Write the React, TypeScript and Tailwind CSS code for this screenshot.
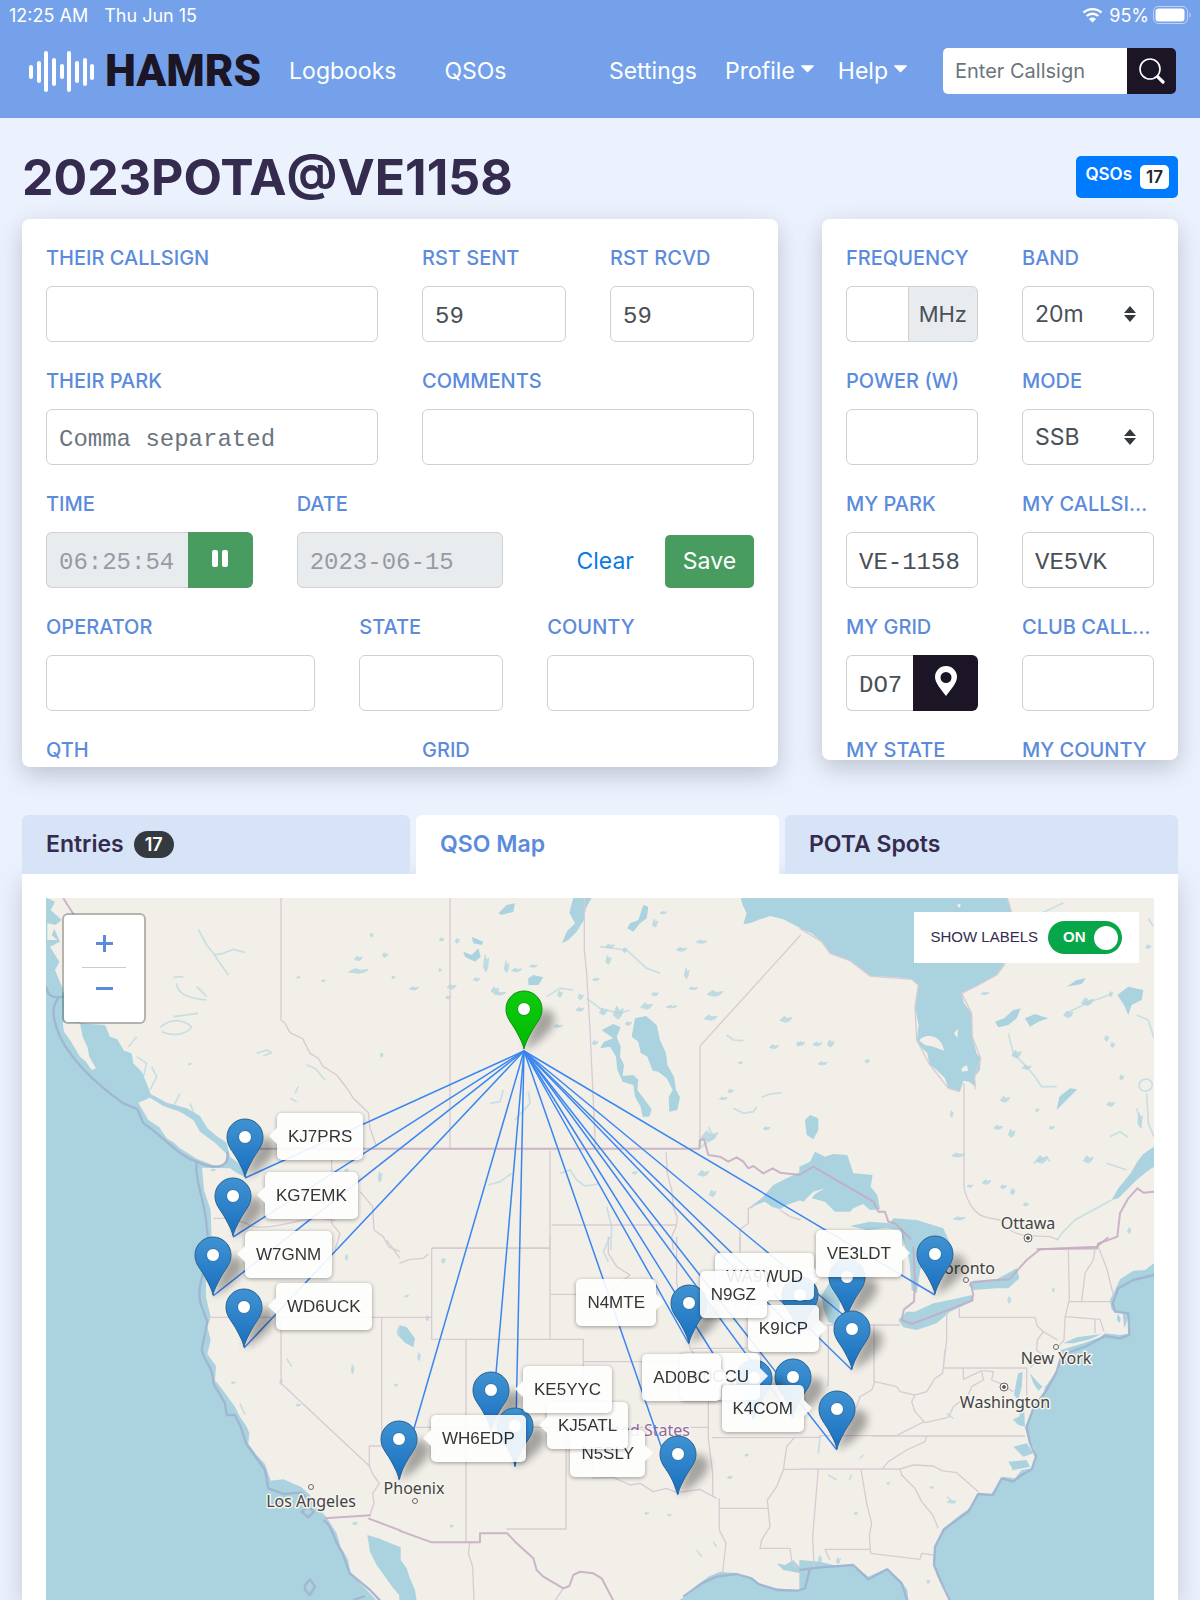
import React from 'react';
import { clsx } from 'clsx';

/* ---------- data ---------- */

type Station = { call: string; x: number; y: number; side: 'left' | 'right' };

// x / y is the tip of the pin on the map canvas, later entries are drawn on top
const stations: Station[] = [
  { call: 'KJ7PRS', x: 199, y: 280, side: 'right' },
  { call: 'KG7EMK', x: 187, y: 339, side: 'right' },
  { call: 'W7GNM', x: 167, y: 398, side: 'right' },
  { call: 'WD6UCK', x: 198, y: 450, side: 'right' },
  { call: 'WA9WUD', x: 801, y: 420, side: 'left' },
  { call: 'K9ICP', x: 806, y: 472, side: 'left' },
  { call: 'N4MTE', x: 643, y: 446, side: 'left' },
  { call: 'N9GZ', x: 754, y: 438, side: 'left' },
  { call: 'VE3LDT', x: 889, y: 397, side: 'left' },
  { call: 'N5SLY', x: 632, y: 597, side: 'left' },
  { call: 'KJ5ATL', x: 469, y: 569, side: 'right' },
  { call: 'KE5YYC', x: 445, y: 533, side: 'right' },
  { call: 'WH6EDP', x: 353, y: 582, side: 'right' },
  { call: 'K0CCU', x: 747, y: 520, side: 'left' },
  { call: 'AD0BC', x: 708, y: 521, side: 'left' },
  { call: 'K4COM', x: 791, y: 552, side: 'left' },
];

const home = { x: 478, y: 152 };

type Tile = {
  x: number;
  y: number;
  water: string[];
  land?: string[];
  coast?: string[];
  borders: string[];
  frontier?: string[];
  rivers?: string[];
  lakes: number[][];
};

// every tile is 1200 units wide, shown at a third of that
const tiles: Tile[] = [
  {
    x: -46,
    y: -8,
    water: [
      'M138 262L175 285 200 320 240 400 315 405 330 440 352 448 372 482 395 490 400 520 425 545 440 580 452 612 500 638 560 655 600 678 622 715 650 738 680 758 690 800 722 825 738 862 712 850 690 835 606 833 612 900 632 960 636 1080 138 1080Z',
      'M138 23L165 35 152 60 185 90 160 110 180 155 150 170 178 215 165 240 190 300 138 310Z',
      'M580 690L610 700 640 740 675 765 665 775 620 740 590 720Z',
    ],
    land: [
      'M188 395L240 400 248 440 262 470 268 500 288 535 275 540 258 515 240 500 210 450 192 425Z',
      'M415 638L450 623 490 648 540 665 580 690 600 725 645 758 680 792 676 826 640 826 590 806 540 775 522 758 500 745 478 712 445 690 428 660Z',
      'M142 100L168 105 155 135 172 150 142 150Z',
    ],
    coast: [
      'M140 290C142 320 160 325 190 320M175 325C155 350 155 380 180 440C220 520 300 590 370 640L412 657 430 700C480 730 530 795 590 815C640 838 690 840 682 785',
      'M590 815C582 880 625 940 624 1080',
    ],
    borders: [
      'M843 23V390L855 400 870 428 908 446 930 490 955 505 970 530 1010 555 1045 600 1060 625 1105 668 1110 715 1130 770',
      'M995 808V1000L1020 1030 1005 1080',
      'M640 985H690L740 1000C760 1022 830 1010 900 992L960 985 1005 992',
      'M1080 905L1118 950 1122 1020 1150 1040 1165 1070 1200 1085',
    ],
    frontier: ['M690 776H1202', 'M190 25L220 72'],
    rivers: [
      'M595 118L620 165 640 190 660 220 685 255M640 195L670 190 700 178 735 187',
      'M530 280C532 310 560 325 620 330M520 262L550 260M590 290L620 320',
      'M480 412C510 388 540 382 575 410C560 435 520 440 485 425M520 380L595 370',
      'M770 490L800 480 815 488 790 497',
      'M410 500L440 520 430 560M385 470L410 440M450 600L470 560 455 530M520 650L540 610M590 690L570 640',
      'M885 610L895 590M870 625L890 635M920 525L945 535 975 570',
    ],
    lakes: [[1075, 205, 12, 7], [1075, 243, 30, 7], [1155, 195, 8, 7], [1180, 262, 5, 4], [1115, 135, 5, 6], [895, 262, 5, 3], [970, 272, 6, 3], [1140, 860, 6, 16], [640, 840, 8, 3], [1145, 495, 4, 7], [1040, 840, 6, 4], [570, 522, 5, 3]],
  },
  {
    x: 354,
    y: -8,
    water: [
      'M1022 23H1202V115L1150 88 1110 78 1080 88 1050 100 1030 102 1040 70 1028 45Z',
      'M520 23H575L558 55 552 90 530 125 505 150 486 160 500 125 525 100 508 68Z',
      'M705 385L738 378 770 405 780 450 798 490 802 525 822 560 828 600 840 622 832 660 808 665 806 622 818 600 800 565 775 545 758 542 742 500 722 488 715 455 695 440Z',
      'M605 420L640 402 662 412 650 440 662 470 660 500 672 525 668 558 700 555 715 570 712 600 735 630 755 658 748 680 728 680 722 650 705 620 700 585 668 575 652 540 648 500 630 470 600 475 612 455 640 445Z',
      'M1045 955L1085 925 1120 885 1160 865 1202 845V930L1160 945 1140 958 1115 950 1095 935Z',
      'M730 45L745 50 740 85 720 100 700 125 682 115 690 100 715 90Z',
      'M190 185L215 195 235 175 242 200 225 215 195 200Z',
      'M385 265L400 255 430 262 415 285 385 285Z',
      'M295 70L320 45 345 40 340 65 305 75Z',
      'M215 140L250 155 245 165 220 160Z',
    ],
    borders: [
      'M150 23V776',
      'M553 23V180L560 250 570 420 578 590 585 740V776',
      'M900 770V468L1202 135',
      'M450 782V1080',
      'M455 1005H830',
      'M798 785L802 850 815 900 820 950 832 985 828 1010 815 1040 820 1080',
      'M1060 950L1045 955V1000L1020 1018V1080',
      'M95 1075H450',
      'M1140 960L1170 980 1202 990',
    ],
    frontier: ['M-2 776H898L900 750 912 748 925 795 960 800 985 815 1010 802 1030 815 1045 835 1060 828 1090 850 1118 835 1140 848 1202 855'],
    rivers: [
      'M480 850L510 840 530 870 555 888 595 882',
      'M265 885L300 875 335 850',
      'M270 640L300 635 310 600M345 690L390 640 385 605',
      'M980 435L1000 450 1030 452M1000 655L1030 670 1060 665 1070 650',
      'M1085 622L1110 612 1145 608M925 710L940 740 900 775M620 950L635 1010 632 1080',
      'M560 325L600 355 660 370 690 360M440 320L480 295 520 300M600 170L680 180 740 235 780 250',
    ],
    lakes: [[125, 148, 7, 5], [172, 152, 6, 8], [258, 220, 8, 26], [320, 230, 7, 18], [350, 240, 16, 5], [285, 300, 12, 10], [300, 310, 18, 5], [230, 268, 10, 5], [155, 290, 14, 7], [145, 322, 8, 5], [42, 295, 14, 5], [120, 240, 4, 5], [475, 408, 14, 4], [542, 320, 8, 9], [540, 358, 12, 6], [480, 312, 7, 10], [588, 268, 10, 4], [630, 168, 13, 6], [625, 210, 8, 13], [675, 180, 6, 8], [765, 100, 8, 12], [790, 68, 10, 4], [905, 155, 16, 5], [845, 178, 16, 6], [860, 250, 7, 16], [945, 310, 24, 9], [880, 295, 13, 4], [932, 383, 20, 8], [815, 350, 16, 4], [765, 312, 10, 6], [740, 348, 18, 10], [655, 368, 15, 20], [610, 365, 12, 10], [685, 400, 10, 6], [585, 458, 8, 7], [1158, 388, 18, 9], [1122, 470, 14, 6], [1022, 518, 7, 3], [992, 603, 9, 5], [970, 625, 12, 4], [910, 850, 17, 9], [938, 910, 10, 10], [928, 738, 26, 16], [1100, 715, 10, 5], [345, 315, 8, 8], [400, 228, 12, 4], [705, 848, 8, 4], [1195, 462, 5, 7]],
  },
  {
    x: 754,
    y: -8,
    water: [
      'M-2 23H622L635 68 620 210 590 255 530 288 485 310 492 340 515 370 517 440 530 490 542 505 540 540 524 560 526 590 508 575 490 572 480 605 462 600 445 595 435 565 410 540 388 522 382 490 362 470 350 450 356 405 345 352 355 285 335 268 290 262 210 258 180 235 150 212 90 190 65 155 35 130-2 115Z',
      'M-2 830L30 815 45 785 75 800 100 792 142 795 160 850 218 855 212 890 232 915 240 958 210 960 190 942 160 955 150 965 105 965 75 935 35 925 45 912 75 895 40 905 10 935-2 930Z',
      'M150 1008L210 995 270 1000 280 985 350 990 430 1015 450 1060 430 1080 380 1080 345 1190 325 1100 300 1020 260 1015 200 1020Z',
      'M1062 770L1030 792 1012 815 992 850 955 895 935 930 955 925 1010 870 1040 845 1062 830Z',
      'M770 660L778 620 810 595 832 598 800 630Z',
      'M585 395L612 385 640 360 662 355 650 385 625 405 595 412Z',
      'M952 315L985 290 1030 300 1025 330 995 345 985 375 972 345Z',
      'M800 290L830 270 858 265 845 282Z',
      'M15 690L30 675 55 685 55 720 40 748 20 735Z',
      'M675 385L705 372 745 385 715 395 690 410Z',
    ],
    land: ['M358 452C370 430 425 430 432 482L400 470 375 465Z', 'M485 535L500 525 505 542 485 545Z', 'M470 45L482 40 480 55Z', 'M462 430L475 415 472 445Z'],
    borders: [
      'M492 580V890C500 940 530 978 560 982L600 990C640 1050 700 1035 750 1040L775 1050',
      'M0 115L65 155 90 190 150 212 210 258 335 268 355 285 345 352 350 450 388 522 445 595 480 605',
      'M485 310L515 370 517 440 542 505 524 560 526 598M622 23L635 68M485 310L530 288 590 255 615 222',
    ],
    frontier: [
      'M-2 855L40 830 220 935 235 965 255 965 265 995 285 1000 330 1045 348 1085',
      'M1062 905L1030 908 1012 895 985 925 960 970 952 1040 920 1052 895 1060 890 1078M710 1078L890 1075',
    ],
    rivers: [
      'M935 930L880 960 825 990 790 1025 770 1050',
      'M625 430L640 490 680 530 705 560 725 590 770 590',
      'M800 370L860 340 935 312',
      'M1040 610L1045 700 1062 740M1010 655L1025 715M1045 85L1060 110M920 820L980 840',
      'M1010 375L1045 390 1062 445M700 820L740 800 750 815M930 740L960 725 985 742M725 70L790 38',
      'M1018 590C1012 565 1050 560 1056 580C1060 605 1025 612 1018 590',
    ],
    lakes: [[862, 335, 18, 12], [805, 373, 14, 10], [650, 492, 14, 12], [680, 532, 14, 6], [555, 310, 12, 4], [933, 312, 5, 8], [920, 445, 6, 9], [938, 465, 6, 8], [965, 562, 6, 8], [615, 628, 14, 9], [932, 642, 12, 7], [865, 808, 15, 11], [725, 808, 18, 12], [635, 730, 10, 12], [595, 712, 14, 6], [475, 795, 20, 6], [510, 888, 9, 4], [560, 876, 13, 7], [610, 890, 10, 6], [638, 905, 7, 10], [678, 943, 8, 5], [478, 985, 18, 5], [92, 460, 10, 11], [5, 460, 9, 6], [52, 462, 14, 6], [68, 520, 14, 5], [202, 513, 7, 6], [455, 672, 4, 10], [1020, 690, 7, 22], [755, 713, 8, 5], [712, 660, 6, 5], [1045, 170, 8, 6], [988, 1022, 5, 9]],
  },
  {
    x: -46,
    y: 342,
    water: [
      'M138 0H636L630 60 618 110 618 170 632 232 622 260 632 300 622 342 648 378 645 420 672 455 705 500 720 530 740 560 748 580 745 612 770 645 795 672 812 722 850 718 905 742 930 765 940 785 962 810 985 840 1010 880 1022 920 1045 960 1050 1000 1100 1050 1130 1082H138Z',
      'M1102 885L1135 895 1202 922V1070L1180 1045 1130 975 1110 935Z',
    ],
    coast: [
      'M636 0V45C600 100 590 170 605 200L622 245 605 330C615 370 640 380 640 430L675 490 680 525 705 525 722 560 738 610 795 690 805 745 850 762 905 758 925 780',
      'M970 840C1000 860 1000 900 1025 935L1050 1000 1110 1050 1140 1082',
      'M915 1035L930 1018 945 1040 930 1065 915 1050ZM905 815L925 800 942 815 925 832ZM1060 1080L1095 1068',
    ],
    borders: [
      'M625 232H1202',
      'M843 232V430L1112 682',
      'M1145 232V618H1108V680L1120 705 1138 730 1118 760 1122 790 1110 825',
      'M1160 0L1200 55',
    ],
    frontier: ['M975 835L1112 826M1105 835L1202 872'],
    rivers: ['M720 490L735 525', 'M860 355L875 380', 'M1170 1010L1180 1040'],
    lakes: [[843, 425, 4, 8], [1058, 388, 4, 14], [700, 428, 6, 3], [1065, 850, 7, 5], [1188, 435, 5, 4], [1040, 52, 4, 9], [895, 495, 8, 3], [1197, 275, 6, 14]],
  },
  {
    x: 354,
    y: 342,
    water: [
      'M-2 955L20 985 28 1010 45 1050 50 1082H-2Z',
      'M-2 255L20 262 45 295 40 322 15 308-2 290Z',
      'M835 1082L870 1060 900 1035 940 1010 1000 1003 1050 1012 1075 1030 1130 1045 1202 1052V1082Z',
      'M880 1045L925 1010 960 995 1010 1000 1000 1010 930 1025Z',
      'M1130 970L1155 975 1180 960 1202 985V1000L1150 990Z',
    ],
    land: ['M1130 1030L1150 1015 1202 1015V1045L1150 1040Z'],
    coast: ['M850 1070L905 1030 950 1010 1010 1002 1055 1015 1075 1032 1130 1050 1202 1052'],
    borders: [
      'M-2 232H95M95 24V298H550V365M450-10V298M95 24H450',
      'M-2 70L30 58 70 55 85 42',
      'M198 298V905M-2 562H500M550 365H870M550 365V562H925',
      'M498 562V867H320',
      'M500 600H580V715L640 712 690 735 720 730 760 755 800 745 830 758 900 748 950 775',
      'M450 163H620L690 105M690 105L650 80 625 40V-10',
      'M830-10V130L850 210 870 325H1040M870 325L900 365 925 420V595L938 700V770M935 593H1202',
      'M958 775V870L978 910 972 960 968 1000M960 805H1105',
      'M1185 590L1160 620 1150 690 1130 740 1102 780 1110 860 1085 900 1080 925H1170L1175 960 1190 985M1150 688H1202',
      'M210 905L205 940 218 980 222 1082M490 1045L465 1082',
      'M1020-10V40',
    ],
    frontier: ['M-2 872L95 907H240V880H322L350 910 400 955 410 990 430 1010 490 1045 508 1038 520 1005 540 995 580 1000 605 1015 640 1082'],
    rivers: ['M630-10L610 35 625 65', 'M890 930L905 950M940 905L950 920'],
    lakes: [[130, 62, 6, 8], [57, 350, 4, 12], [82, 235, 4, 8], [20, 168, 6, 3], [155, 858, 5, 4], [740, 820, 6, 3], [808, 825, 6, 3], [990, 712, 8, 4], [1040, 645, 5, 4]],
  },
  {
    x: 754,
    y: 342,
    water: [
      'M1062 70L1035 90 1000 92 960 118 945 150 930 180 935 210 955 215 950 240 975 262 985 225 988 280 960 285 915 280 900 292 850 310 782 330 775 392 735 440 728 470 690 525 675 565 685 600 702 625 708 660 695 685 665 690 645 715 610 710 592 738 572 765 530 762 515 800 480 825 430 865 405 915 400 960 412 1010 440 1050 450 1082H1062Z',
      'M-2 960L60 965 100 975 160 975 205 1010 260 985 300 1020 322 1050 325 1082H-2Z',
      'M505 135L520 122 590 118 650 85 658 115 625 145 590 145 520 150Z',
      'M295 240L320 215 345 215 400 190 460 178 515 165 522 182 450 215 410 250 350 270 310 262Z',
      'M65 165L100 110 120 150 118 230 105 255 85 245 70 205Z',
      'M325 0H370L365 60 350 160 335 150 330 80Z',
      'M655 400L668 395 665 440 655 480 642 465 648 430ZM690 400L712 425 728 440 715 452 700 430Z',
      'M650 490L672 500 675 560 655 555 640 540 660 530ZM640 620L680 610 700 640 670 650ZM625 665L680 660 690 680 640 690Z',
      'M790 310L830 292 905 282 870 298 820 310Z',
    ],
    land: ['M950 215L968 218 972 262 958 262 962 235Z'],
    coast: [
      'M1062 105L1000 120 955 145 938 190 945 215 985 220 988 285 960 295 915 288 860 318 785 345 770 395 740 450 700 505 680 560 690 610 708 650 695 688 660 708 640 725 605 715 578 765 535 762 505 815 432 868 405 920 402 975 425 1030 450 1082',
      'M-2 990L60 982 160 975 205 1018 262 988 305 1030 322 1082M30 985L15 1045-2 1050',
    ],
    borders: [
      'M805 25L808 180 795 232 792 300 775 320M885 25L880 60 855 100 845 185M805 185H932M795 230L900 238 912 275M885 238V280M895 20L920 85 940 165',
      'M478 205V232H705L712 258 730 275 772 300M730 275L712 300 710 330 728 345 692 382',
      'M440 215V300L430 384H680V500M435 330L428 400 405 415 380 455 345 465 335 485 345 515 375 548 445 532 460 500 505 465 515 440 550 420 545 392 490 418V384M550 392L580 395 575 420 600 430 640 455',
      'M80 255H222V430M222 255H300M85 255V420L82 440',
      'M345 465L300 455 290 440 225 425 215 450 180 470 170 500 120 520',
      'M372 545L290 587H60L58 592H-2M215 588H675',
      'M380 588L375 605 320 630 265 665 245 688M-2 687H300L340 675 400 678 425 692 470 698 535 755M300 687L305 705 345 745 365 785 398 825 415 865',
      'M183 687L200 790 215 850 208 885 212 940 360 958 365 940 400 945M212 928H75L90 960M55 687L38 890 42 980',
    ],
    frontier: ['M340 20L345 120 342 185 312 208 305 240 335 252 440 212 515 182 520 165 512 128 560 122 628 118 680 60 720 28 890 20 925-8'],
    rivers: ['M60 590L55 640', 'M440 770L465 790', 'M110 720L85 705M155 705L148 720', 'M180 655L190 645M440 520L460 535M640 540L670 525M635 690L670 668'],
    lakes: [[628, 180, 5, 10], [455, 785, 14, 4], [395, 742, 6, 3], [168, 820, 5, 4], [385, 1025, 4, 6], [760, 150, 3, 6], [265, 730, 5, 3], [60, 958, 5, 12], [115, 962, 6, 10]],
  },
];

// name, x, baseline, anchor, dot x, dot y, capital
const cities: [string, number, number, 'middle' | 'end', number, number, boolean][] = [
  ['Ottawa', 982, 331, 'middle', 982, 340, true],
  ['Toronto', 949, 376, 'end', 920, 382, false],
  ['New York', 1010, 466, 'middle', 1010, 449, false],
  ['Washington', 959, 510, 'middle', 958, 489, true],
  ['Los Angeles', 265, 609, 'middle', 265, 589, false],
  ['Phoenix', 368, 596, 'middle', 369, 603, false],
];

/* ---------- small pieces ---------- */

const Caret = () => (
  <svg width="13" height="8" viewBox="0 0 14 8" className="mb-1 shrink-0" aria-hidden="true">
    <path d="M1 0h12c.8 0 1 .8.5 1.300L7.600 7.200a.8.8 0 0 1-1.200 0L.5 1.300C0 .8.2 0 1 0Z" fill="currentColor" />
  </svg>
);

type FieldProps = {
  id: string;
  label: string;
  value?: string;
  placeholder?: string;
  disabled?: boolean;
  className?: string;
  addon?: React.ReactNode;
  options?: string[];
};

const Field: React.FC<FieldProps> = ({ id, label, value, placeholder, disabled, className, addon, options }) => (
  <div className={clsx('min-w-0', className)}>
    <label htmlFor={id} className="mb-[13px] block truncate text-[20px] leading-[30px] font-medium text-[#5c8bdc]">
      {label}
    </label>
    {options ? (
      <div className="relative">
        <select
          id={id}
          defaultValue={options[0]}
          className="h-14 w-full appearance-none rounded-md border border-[#ced0d3] bg-white px-3 text-[23px] text-[#495057] outline-none"
        >
          {options.map((o) => (
            <option key={o}>{o}</option>
          ))}
        </select>
        <svg className="pointer-events-none absolute top-5 right-[18px]" width="12" height="16" viewBox="0 0 12 16" aria-hidden="true">
          <path d="M6 0l6 7H0zM6 16l6-7H0z" fill="#343a40" />
        </svg>
      </div>
    ) : (
      <div className="flex">
        <input
          id={id}
          type="text"
          defaultValue={value}
          placeholder={placeholder}
          disabled={disabled}
          className={clsx(
            'h-14 w-full min-w-0 border border-[#ced0d3] px-3 pt-1 font-["Liberation_Mono",monospace] text-2xl outline-none placeholder:text-[#6c757d]',
            addon ? 'flex-1 rounded-l-md border-r-0' : 'rounded-md',
            disabled ? 'bg-[#e9ecef] text-[#969ca3]' : 'bg-white text-[#495057]',
          )}
        />
        {addon}
      </div>
    )}
  </div>
);

/* ---------- map ---------- */

const Pin: React.FC<{ x: number; y: number; home?: boolean }> = ({ x, y, home: isHome }) => (
  <g transform={`translate(${x} ${y})`}>
    <path d="M0 0C6-14 10-36 18-40C30-42 34-30 27-21C19-11 7-3 0 0Z" fill="#000" opacity=".32" filter="url(#soft)" />
    <path
      d="M0-1C-1-6-4-12-9-21C-14-29-18-33-18-41A18 18 0 0 1 18-41C18-33 14-29 9-21C4-12 1-6 0-1Z"
      fill={isHome ? 'url(#pin-green)' : 'url(#pin-blue)'}
      stroke={isHome ? '#0b8f0b' : '#2a6390'}
      strokeWidth="1"
    />
    <circle cy="-41" r="6.500" fill="#fff" stroke={isHome ? '#07a007' : '#2c72a8'} strokeWidth="1" />
  </g>
);

const BaseMap = () => (
  <svg className="block" width="1108" height="702" viewBox="0 0 1108 702" role="img" aria-label="QSO map of North America">
    <defs>
      <linearGradient id="pin-blue" x1="0" y1="0" x2="0" y2="1">
        <stop offset="0" stopColor="#3f93d2" />
        <stop offset="1" stopColor="#1a6fc0" />
      </linearGradient>
      <linearGradient id="pin-green" x1="0" y1="0" x2="0" y2="1">
        <stop offset="0" stopColor="#0fcb0f" />
        <stop offset="1" stopColor="#00bb00" />
      </linearGradient>
      <filter id="soft" x="-50%" y="-50%" width="200%" height="200%">
        <feGaussianBlur stdDeviation="4" />
      </filter>
    </defs>
    <rect width="1108" height="702" fill="#f2efe9" />

    {tiles.map((t, i) => (
      <g key={i} transform={`translate(${t.x} ${t.y}) scale(0.33333)`} strokeLinejoin="round">
        <g fill="#aad3df">
          {t.water.map((d) => (
            <path key={d} d={d} />
          ))}
          {t.lakes.map(([cx, cy, rx, ry]) => (
            <path
              key={`${cx}-${cy}`}
              d={`M${cx - rx} ${cy + ry * 0.4}L${cx - rx * 0.3} ${cy - ry}L${cx + rx * 0.2} ${cy - ry * 0.3}L${cx + rx} ${cy - ry * 0.6}L${cx + rx * 0.6} ${cy + ry * 0.5}L${cx} ${cy + ry}Z`}
              stroke="#aad3df"
              strokeWidth="3"
              opacity=".7"
            />
          ))}
        </g>
        {t.land?.map((d) => <path key={d} d={d} fill="#f2efe9" />)}
        {t.rivers?.map((d) => <path key={d} d={d} fill="none" stroke="#aad3df" strokeWidth="5" opacity=".6" />)}
        {t.borders.map((d) => <path key={d} d={d} fill="none" stroke="#d8cbd4" strokeWidth="4" />)}
        {t.coast?.map((d) => <path key={d} d={d} fill="none" stroke="#9fb3cf" strokeWidth="7" opacity=".9" />)}
        {t.frontier?.map((d) => <path key={d} d={d} fill="none" stroke="#c6a9c2" strokeWidth="6" opacity=".85" />)}
      </g>
    ))}

    <g fontFamily='"Noto Sans", sans-serif' fontSize="16" stroke="#f5f3ee" strokeWidth="3" strokeLinejoin="round" paintOrder="stroke">
      <text x="644" y="538" textAnchor="end" fill="#94689b">
        United States
      </text>
      {cities.map(([name, x, y, anchor]) => (
        <text key={name} x={x} y={y} textAnchor={anchor} fill="#444">
          {name}
        </text>
      ))}
    </g>
    {cities.map(([name, , , , cx, cy, capital]) => (
      <g key={name} fill="#f8f7f4" stroke="#666" strokeWidth="1">
        <circle cx={cx} cy={cy} r={capital ? 4 : 2.5} />
        {capital && <circle cx={cx} cy={cy} r="1.500" fill="#555" />}
      </g>
    ))}

    <g stroke="#3a86f0" strokeWidth="1.500">
      {stations.map((s) => (
        <line key={s.call} x1={home.x} y1={home.y + 1} x2={s.x} y2={s.y} />
      ))}
    </g>
    {[...stations].sort((a, b) => a.y - b.y).map((s) => (
      <Pin key={s.call} x={s.x} y={s.y} />
    ))}
    <Pin x={home.x} y={home.y} home />
  </svg>
);

const StationLabel: React.FC<{ station: Station }> = ({ station: { call, x, y, side } }) => (
  <div
    className="absolute flex h-[47px] items-center rounded-[5px] bg-white px-[11px] font-['Liberation_Sans',Arial,sans-serif] text-[17px] whitespace-nowrap text-[#222] opacity-90 shadow-[0_1px_4px_rgba(0,0,0,0.4)]"
    style={side === 'right' ? { left: x + 32, top: y - 65 } : { right: 1108 - x + 33, top: y - 65 }}
  >
    <span
      className={clsx(
        'absolute top-[15px] border-y-8 border-transparent',
        side === 'right' ? '-left-[8px] border-r-8 border-r-white' : '-right-[8px] border-l-8 border-l-white',
      )}
    />
    {call}
  </div>
);

const QsoMap = () => (
  <div className="relative h-[702px] overflow-hidden bg-[#aad3df]">
    <div className="relative w-[1108px]">
      <BaseMap />
      {stations.map((s) => (
        <StationLabel key={s.call} station={s} />
      ))}
    </div>

    <div className="absolute top-[15px] left-4 flex h-[111px] w-[84px] flex-col items-center rounded-md border-2 border-black/25 bg-white bg-clip-padding pt-[5px] text-[#5c8bdc]">
      <button type="button" aria-label="Zoom in" className="flex h-[48px] w-11 items-center justify-center border-b border-[#ccc]">
        <svg width="17" height="17" viewBox="0 0 17 17" aria-hidden="true">
          <path d="M8.500 0v17M0 8.500h17" stroke="currentColor" strokeWidth="3" />
        </svg>
      </button>
      <button type="button" aria-label="Zoom out" className="flex h-[40px] w-11 items-center justify-center">
        <svg width="17" height="17" viewBox="0 0 17 17" aria-hidden="true">
          <path d="M0 8.500h17" stroke="currentColor" strokeWidth="3" />
        </svg>
      </button>
    </div>

    <label className="absolute top-[14px] right-[15px] flex h-[51px] items-center gap-[10px] bg-white pr-[17px] pl-4 font-['Liberation_Sans',Arial,sans-serif] text-[15px] text-[#352b4f]">
      SHOW LABELS
      <input type="checkbox" defaultChecked className="peer sr-only" />
      <span className="flex h-[33px] w-[74px] items-center justify-between rounded-full bg-[#06a649] pr-1 pl-[15px] text-[15px] font-bold text-white">
        ON
        <span className="size-6 rounded-full bg-white" />
      </span>
    </label>
  </div>
);

/* ---------- header ---------- */

// x, y, height
const bars = [
  [0, 14, 14],
  [8, 10, 22],
  [15, 0, 41],
  [23, 7, 28],
  [31, 13, 15],
  [38, 0, 41],
  [46, 10, 22],
  [54, 7, 28],
  [61, 13, 16],
];

const Header = () => (
  <header className="h-[118px] bg-[#74a1ea] text-white">
    <div className="flex h-[30px] items-center pr-2 pl-[9px] text-[18px]">
      <span>12:25 AM</span>
      <span className="ml-4">Thu Jun 15</span>
      <svg className="ml-auto" width="21" height="16" viewBox="0 0 21 16" fill="none" stroke="currentColor" aria-hidden="true">
        <path d="M1.500 5.700a13 13 0 0 1 18 0M4.700 9a8.400 8.400 0 0 1 11.600 0" strokeWidth="2.400" />
        <path d="M10.500 15.500L7 12a5 5 0 0 1 7 0z" fill="currentColor" stroke="none" />
      </svg>
      <span className="ml-[6px]">95%</span>
      <svg className="ml-1" width="39" height="18" viewBox="0 0 39 18" aria-hidden="true">
        <rect x=".5" y=".5" width="34" height="17" rx="5" fill="none" stroke="#fff" strokeOpacity=".55" />
        <rect x="2.500" y="2.500" width="29" height="13" rx="3" fill="#fff" />
        <path d="M36.500 6.500v5c1.500-.5 1.500-4.500 0-5Z" fill="#fff" opacity=".6" />
      </svg>
    </div>
    <nav className="flex h-[82px] items-center pr-6 pl-[29px] text-[23px]">
      <a href="#home" className="flex items-center gap-[10px]">
        <svg width="66" height="41" viewBox="0 0 66 41" fill="#fff" aria-hidden="true">
          {bars.map(([x, y, h]) => (
            <rect key={x} x={x} y={y} width="4" height={h} rx="2" />
          ))}
        </svg>
        <span className="font-[Roboto,sans-serif] text-[44px] leading-none font-black text-[#1b1525]">HAMRS</span>
      </a>
      <a href="#logbooks" className="ml-7">Logbooks</a>
      <a href="#qsos" className="ml-12">QSOs</a>
      <a href="#settings" className="ml-auto">Settings</a>
      <button type="button" className="ml-7 flex items-center gap-[6px]">
        Profile <Caret />
      </button>
      <button type="button" className="ml-6 flex items-center gap-[6px]">
        Help <Caret />
      </button>
      <form className="ml-9 flex h-[46px] overflow-hidden rounded-[5px]">
        <input
          type="text"
          aria-label="Enter Callsign"
          placeholder="Enter Callsign"
          className="w-[184px] bg-white px-3 text-[20px] text-[#495057] outline-none placeholder:text-[#6c757d]"
        />
        <button type="button" aria-label="Search" className="flex w-[49px] items-center justify-center bg-[#1b1525]">
          <svg width="26" height="26" viewBox="0 0 26 26" fill="none" stroke="currentColor" strokeLinecap="round" aria-hidden="true">
            <circle cx="11" cy="11" r="10" strokeWidth="1.600" />
            <path d="M18.800 18.800L24 24" strokeWidth="3.200" />
          </svg>
        </button>
      </form>
    </nav>
  </header>
);

/* ---------- page ---------- */

const card = 'overflow-hidden rounded-lg bg-white px-6 pt-6 shadow-[0_8px_24px_rgba(60,75,95,0.28)]';

export default function App() {
  return (
    <div className="min-h-screen bg-[#ecf2fd] font-[Inter,sans-serif] text-[#352b4f]">
      <Header />

      <main className="px-[22px]">
        <div className="flex h-[101px] items-center justify-between pt-4">
          <h1 className="text-[50px] leading-none font-bold">2023POTA@VE1158</h1>
          <button type="button" className="flex h-[42px] items-center gap-2 rounded-[5px] bg-[#007bff] px-[9px] text-[17px] font-semibold text-white">
            <span className="pb-1">QSOs</span>
            <span className="rounded-[5px] bg-white px-[6px] leading-6 text-[#212529]">17</span>
          </button>
        </div>

        <div className="grid grid-cols-12 items-start gap-x-11">
          <form className={clsx(card, 'col-span-8 grid h-[548px] grid-cols-12 content-start gap-x-11 gap-y-6')}>
            <Field id="their-callsign" label="THEIR CALLSIGN" className="col-span-6" />
            <Field id="rst-sent" label="RST SENT" value="59" className="col-span-3" />
            <Field id="rst-rcvd" label="RST RCVD" value="59" className="col-span-3" />
            <Field id="their-park" label="THEIR PARK" placeholder="Comma separated" className="col-span-6" />
            <Field id="comments" label="COMMENTS" className="col-span-6" />
            <Field
              id="time"
              label="TIME"
              value="06:25:54"
              disabled
              className="col-span-4"
              addon={
                <button type="button" aria-label="Pause clock" className="flex w-[65px] shrink-0 items-center justify-center rounded-r-md bg-[#489c5f] pb-1">
                  <svg width="16" height="17" viewBox="0 0 16 17" fill="#fff" aria-hidden="true">
                    <rect width="6" height="17" rx="2" />
                    <rect x="10" width="6" height="17" rx="2" />
                  </svg>
                </button>
              }
            />
            <Field id="date" label="DATE" value="2023-06-15" disabled className="col-span-4" />
            <div className="col-span-4 flex items-end justify-end gap-[31px] text-[23px]">
              <button type="button" className="h-[53px] text-[#0a7ae0]">Clear</button>
              <button type="button" className="h-[53px] w-[89px] rounded-[5px] bg-[#489c5f] text-white">Save</button>
            </div>
            <Field id="operator" label="OPERATOR" className="col-span-5" />
            <Field id="state" label="STATE" className="col-span-3" />
            <Field id="county" label="COUNTY" className="col-span-4" />
            <Field id="qth" label="QTH" className="col-span-6" />
            <Field id="grid" label="GRID" className="col-span-6" />
          </form>

          <form className={clsx(card, 'col-span-4 grid h-[541px] grid-cols-2 content-start gap-x-11 gap-y-6')}>
            <Field
              id="frequency"
              label="FREQUENCY"
              addon={
                <span className="flex shrink-0 items-center rounded-r-md border border-[#ced0d3] bg-[#e9ecef] px-[10px] text-[22px] text-[#495057]">MHz</span>
              }
            />
            <Field id="band" label="BAND" options={['20m', '40m', '80m']} />
            <Field id="power" label="POWER (W)" />
            <Field id="mode" label="MODE" options={['SSB', 'CW', 'FT8']} />
            <Field id="my-park" label="MY PARK" value="VE-1158" />
            <Field id="my-callsign" label="MY CALLSIGN" value="VE5VK" />
            <Field
              id="my-grid"
              label="MY GRID"
              value="DO7"
              addon={
                <button type="button" aria-label="Use my location" className="flex w-[65px] shrink-0 items-center justify-center rounded-r-md bg-[#1b1525] pb-1">
                  <svg width="22" height="30" viewBox="0 0 22 30" aria-hidden="true">
                    <path d="M11 0a11 11 0 0 1 11 11c0 6-6 12-11 19C6 23 0 17 0 11A11 11 0 0 1 11 0Zm0 6a5.500 5.500 0 1 0 0 11 5.500 5.500 0 0 0 0-11Z" fill="#fff" />
                  </svg>
                </button>
              }
            />
            <Field id="club-callsign" label="CLUB CALLSIGN" />
            <Field id="my-state" label="MY STATE" />
            <Field id="my-county" label="MY COUNTY" />
          </form>
        </div>

        <section className="mt-12">
          <div role="tablist" className="relative grid grid-cols-[388fr_363fr_393fr] gap-[6px] text-left text-[23px] font-semibold">
            <button type="button" role="tab" className="flex h-[59px] items-center gap-[10px] rounded-t-md bg-[#d7e3f6] px-6">
              Entries
              <span className="rounded-full bg-[#343a40] px-[11px] text-[18px] leading-[27px] text-white">17</span>
            </button>
            <button type="button" role="tab" aria-selected="true" className="flex h-[59px] items-center rounded-t-md bg-white px-6 text-[#5c8bdc]">
              QSO Map
            </button>
            <button type="button" role="tab" className="flex h-[59px] items-center rounded-t-md bg-[#d7e3f6] px-6">
              POTA Spots
            </button>
          </div>
          <div className="bg-white px-6 pt-6 shadow-[0_8px_24px_rgba(60,75,95,0.25)]">
            <QsoMap />
          </div>
        </section>
      </main>
    </div>
  );
}
